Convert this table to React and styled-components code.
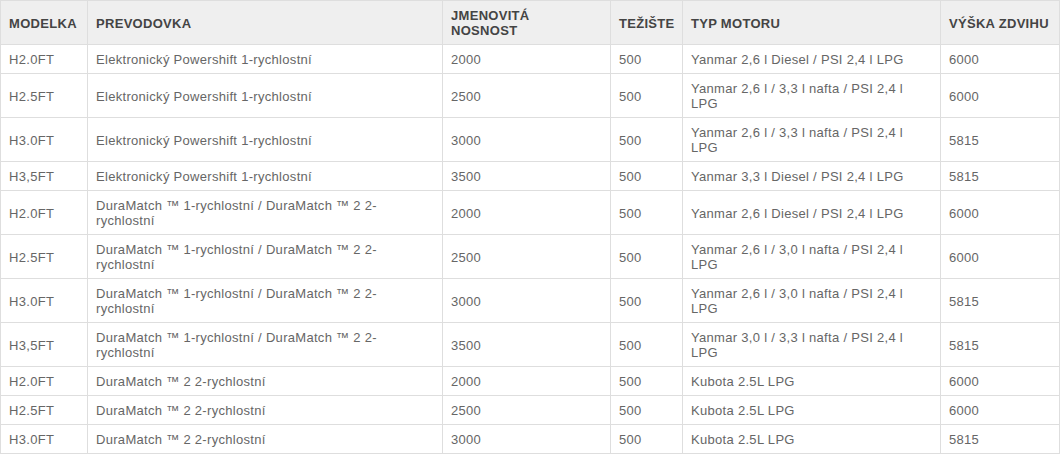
import React from 'react'
import styled, { createGlobalStyle } from 'styled-components'

const GlobalStyle = createGlobalStyle`
  body {
    margin: 0;
    background: #fff;
    font-family: "Liberation Sans", Arial, sans-serif;
  }
`

const Table = styled.table`
  width: 1059px;
  table-layout: fixed;
  border-collapse: collapse;
  font-size: 13px;
  line-height: 15px;
  letter-spacing: 0.3px;
`

const HeadCell = styled.th`
  background: #efefef;
  color: #444;
  font-weight: bold;
  text-align: left;
  vertical-align: middle;
  padding: 7px 8px 6px;
  border: 1px solid #dedede;
  text-transform: uppercase;
  white-space: nowrap;
`

const Cell = styled.td`
  color: #666;
  vertical-align: middle;
  padding: 7px 8px 6px;
  border: 1px solid #dedede;
`

const columns = [
  { label: 'Modelka', width: 87 },
  { label: 'Prevodovka', width: 355 },
  { label: <>Jmenovitá<br />nosnost</>, width: 168 },
  { label: 'Težište', width: 72 },
  { label: 'Typ motoru', width: 258 },
  { label: 'Výška zdvihu', width: 119 },
]

const powershift = 'Elektronický Powershift 1-rychlostní'
const duraMix = 'DuraMatch ™ 1-rychlostní / DuraMatch ™ 2 2-rychlostní'
const dura2 = 'DuraMatch ™ 2 2-rychlostní'

const rows = [
  ['H2.0FT', powershift, '2000', '500', 'Yanmar 2,6 l Diesel / PSI 2,4 l LPG', '6000'],
  ['H2.5FT', powershift, '2500', '500', 'Yanmar 2,6 l / 3,3 l nafta / PSI 2,4 l LPG', '6000'],
  ['H3.0FT', powershift, '3000', '500', 'Yanmar 2,6 l / 3,3 l nafta / PSI 2,4 l LPG', '5815'],
  ['H3,5FT', powershift, '3500', '500', 'Yanmar 3,3 l Diesel / PSI 2,4 l LPG', '5815'],
  ['H2.0FT', duraMix, '2000', '500', 'Yanmar 2,6 l Diesel / PSI 2,4 l LPG', '6000'],
  ['H2.5FT', duraMix, '2500', '500', 'Yanmar 2,6 l / 3,0 l nafta / PSI 2,4 l LPG', '6000'],
  ['H3.0FT', duraMix, '3000', '500', 'Yanmar 2,6 l / 3,0 l nafta / PSI 2,4 l LPG', '5815'],
  ['H3,5FT', duraMix, '3500', '500', 'Yanmar 3,0 l / 3,3 l nafta / PSI 2,4 l LPG', '5815'],
  ['H2.0FT', dura2, '2000', '500', 'Kubota 2.5L LPG', '6000'],
  ['H2.5FT', dura2, '2500', '500', 'Kubota 2.5L LPG', '6000'],
  ['H3.0FT', dura2, '3000', '500', 'Kubota 2.5L LPG', '5815'],
]

export default function App() {
  return (
    <>
      <GlobalStyle />
      <Table>
        <colgroup>
          {columns.map((c, i) => <col key={i} style={{ width: c.width }} />)}
        </colgroup>
        <thead>
          <tr>
            {columns.map((c, i) => <HeadCell key={i}>{c.label}</HeadCell>)}
          </tr>
        </thead>
        <tbody>
          {rows.map((r, i) => (
            <tr key={i}>
              {r.map((v, j) => <Cell key={j}>{v}</Cell>)}
            </tr>
          ))}
        </tbody>
      </Table>
    </>
  )
}
